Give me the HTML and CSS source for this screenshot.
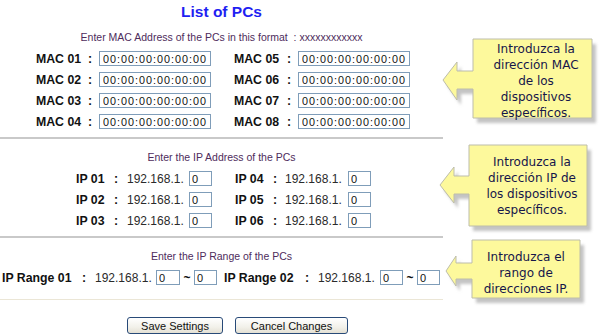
FILE: index.html
```html
<!DOCTYPE html>
<html lang="en">
<head>
    <meta charset="UTF-8">
    <title>List of PCs</title>
    <link rel="stylesheet" href="styles.css">
</head>
<body>
    <div class="page">
        <h1 class="title">List of PCs</h1>

        <p class="hint">Enter MAC Address of the PCs in this format &nbsp;: xxxxxxxxxxxx</p>
        <div class="rows mac-rows">
            <div class="row">
                <span class="lbl w-mac">MAC 01</span><span class="colon w11">:</span><input class="mac" value="00:00:00:00:00:00">
                <span class="lbl w-mac2">MAC 05</span><span class="colon w11">:</span><input class="mac" value="00:00:00:00:00:00">
            </div>
            <div class="row">
                <span class="lbl w-mac">MAC 02</span><span class="colon w11">:</span><input class="mac" value="00:00:00:00:00:00">
                <span class="lbl w-mac2">MAC 06</span><span class="colon w11">:</span><input class="mac" value="00:00:00:00:00:00">
            </div>
            <div class="row">
                <span class="lbl w-mac">MAC 03</span><span class="colon w11">:</span><input class="mac" value="00:00:00:00:00:00">
                <span class="lbl w-mac2">MAC 07</span><span class="colon w11">:</span><input class="mac" value="00:00:00:00:00:00">
            </div>
            <div class="row">
                <span class="lbl w-mac">MAC 04</span><span class="colon w11">:</span><input class="mac" value="00:00:00:00:00:00">
                <span class="lbl w-mac2">MAC 08</span><span class="colon w11">:</span><input class="mac" value="00:00:00:00:00:00">
            </div>
        </div>
        <hr class="rule">

        <p class="hint">Enter the IP Address of the PCs</p>
        <div class="rows ip-rows">
            <div class="row">
                <span class="lbl w-ip">IP 01</span><span class="colon w13">:</span><span class="pre w62">192.168.1.</span><input class="oct" value="0">
                <span class="lbl w-ip2">IP 04</span><span class="colon w12">:</span><span class="pre w63">192.168.1.</span><input class="oct" value="0">
            </div>
            <div class="row">
                <span class="lbl w-ip">IP 02</span><span class="colon w13">:</span><span class="pre w62">192.168.1.</span><input class="oct" value="0">
                <span class="lbl w-ip2">IP 05</span><span class="colon w12">:</span><span class="pre w63">192.168.1.</span><input class="oct" value="0">
            </div>
            <div class="row">
                <span class="lbl w-ip">IP 03</span><span class="colon w13">:</span><span class="pre w62">192.168.1.</span><input class="oct" value="0">
                <span class="lbl w-ip2">IP 06</span><span class="colon w12">:</span><span class="pre w63">192.168.1.</span><input class="oct" value="0">
            </div>
        </div>
        <hr class="rule">

        <p class="hint">Enter the IP Range of the PCs</p>
        <div class="rows range-rows">
            <div class="row">
                <span class="lbl w80">IP Range 01</span><span class="colon w13">:</span><span class="pre w61">192.168.1.</span><input class="oct wide" value="0"><span class="tilde">~</span><input class="oct" value="0">
                <span class="lbl w-rng2">IP Range 02</span><span class="colon w13">:</span><span class="pre w62">192.168.1.</span><input class="oct" value="0"><span class="tilde">~</span><input class="oct" value="0">
            </div>
        </div>
        <hr class="rule light">

        <div class="actions">
            <button class="btn save">Save Settings</button>
            <button class="btn cancel">Cancel Changes</button>
        </div>
    </div>

    <div class="note note-mac">
        <svg width="162" height="92" viewBox="0 0 162 92">
            <defs><filter id="sh1"><feGaussianBlur stdDeviation="1.6"/></filter></defs>
            <path d="M33 3H152V82H33V53H17V64L3 44L17 26V35H33Z" fill="#c4c4c4" transform="translate(4 5)" filter="url(#sh1)"/>
            <path d="M33 3H152V82H33V53H17V64L3 44L17 26V35H33Z" fill="#fdf99c" stroke="#bdbdab"/>
        </svg>
        <div class="note-text">Introduzca la<br>dirección MAC<br>de los<br>dispositivos<br>específicos.</div>
    </div>

    <div class="note note-ip">
        <svg width="162" height="94" viewBox="0 0 162 94">
            <defs><filter id="sh2"><feGaussianBlur stdDeviation="1.6"/></filter></defs>
            <path d="M33 4H151V85H33V53H18V62L4 44L18 26V35H33Z" fill="#c4c4c4" transform="translate(4 5)" filter="url(#sh2)"/>
            <path d="M33 4H151V85H33V53H18V62L4 44L18 26V35H33Z" fill="#fdf99c" stroke="#bdbdab"/>
        </svg>
        <div class="note-text">Introduzca la<br>dirección IP de<br>los dispositivos<br>específicos.</div>
    </div>

    <div class="note note-range">
        <svg width="152" height="72" viewBox="0 0 152 72">
            <defs><filter id="sh3"><feGaussianBlur stdDeviation="1.6"/></filter></defs>
            <path d="M32 4H140V62H32V43H16V50L6 35L16 20V27H32Z" fill="#c4c4c4" transform="translate(4 5)" filter="url(#sh3)"/>
            <path d="M32 4H140V62H32V43H16V50L6 35L16 20V27H32Z" fill="#fdf99c" stroke="#bdbdab"/>
        </svg>
        <div class="note-text">Introduzca el<br>rango de<br>direcciones IP.</div>
    </div>
</body>
</html>
```

FILE: styles.css
```css
body {
    margin: 0;
    background: #ffffff;
    font-family: "Liberation Sans", Arial, sans-serif;
    color: #111111;
    position: relative;
}

.page {
    width: 443px;
}

.title {
    margin: 0;
    height: 24px;
    line-height: 24px;
    font-size: 15.5px;
    font-weight: bold;
    color: #1f1ff2;
    text-align: center;
}

.hint {
    margin: 6px 0 0;
    height: 14px;
    line-height: 14px;
    font-size: 10.5px;
    color: #4e2c5c;
    text-align: center;
}

.rule + .hint {
    margin-top: 11px;
}

.rows {
    margin-top: 4px;
}

.row {
    display: flex;
    align-items: center;
    height: 21px;
}

.mac-rows .row { padding-left: 36px; }
.ip-rows .row { padding-left: 76px; }
.range-rows .row { padding-left: 2px; }

.lbl {
    font-size: 12.3px;
    font-weight: bold;
    white-space: nowrap;
}

.colon {
    font-size: 12.3px;
    font-weight: bold;
}

.pre {
    font-size: 12px;
    color: #2a2a2a;
    white-space: nowrap;
}

.w-mac { width: 52px; }
.w-mac2 { width: 53px; margin-left: 23px; }
.w-ip { width: 38px; }
.w-ip2 { width: 38px; margin-left: 23px; }
.w80 { width: 80px; }
.w-rng2 { width: 81px; margin-left: 7px; }
.w11 { width: 11px; }
.w12 { width: 12px; }
.w13 { width: 13px; }
.w61 { width: 61px; }
.w62 { width: 62px; }
.w63 { width: 63px; }

input {
    box-sizing: border-box;
    height: 15px;
    margin: 0;
    padding: 0 2px;
    border: 1px solid #7f9db9;
    background: #ffffff;
    font-family: "Liberation Sans", Arial, sans-serif;
    font-size: 11px;
    color: #111111;
}

.mac {
    width: 112px;
    padding: 0 3px;
    letter-spacing: 1px;
    font-size: 10.8px;
}

.oct {
    width: 23px;
}

.oct.wide {
    width: 24px;
}

.tilde {
    width: 14px;
    text-align: center;
    font-size: 12px;
    font-weight: bold;
}

.rule {
    margin: 5px 0 0;
    border: 0;
    border-top: 2px solid #c9c9c9;
    height: 0;
}

.range-rows + .rule {
    margin-top: 11px;
}

.rule.light {
    border-top: 1px solid #ebe6d6;
}

.actions {
    display: flex;
    gap: 12px;
    padding-left: 127px;
    margin-top: 17px;
}

.btn {
    height: 17px;
    padding: 0;
    border: 1px solid #284a78;
    border-radius: 3px;
    background: linear-gradient(#ffffff, #f2f1ea 60%, #e3e0d4);
    font-family: "Liberation Sans", Arial, sans-serif;
    font-size: 11px;
    color: #111111;
}

.save { width: 96px; }
.cancel { width: 113px; }

.note {
    position: absolute;
}

.note svg {
    display: block;
}

.note-text {
    position: absolute;
    font-family: "DejaVu Sans", Verdana, sans-serif;
    font-size: 12px;
    line-height: 16px;
    color: #16164a;
    text-align: center;
    white-space: nowrap;
}

.note-mac { left: 440px; top: 36px; }
.note-mac .note-text { left: 37px; top: 5px; width: 118px; }

.note-ip { left: 436px; top: 141px; }
.note-ip .note-text { left: 37px; top: 13px; width: 118px; }

.note-range { left: 440px; top: 236px; }
.note-range .note-text { left: 34px; top: 13px; width: 104px; }
```
